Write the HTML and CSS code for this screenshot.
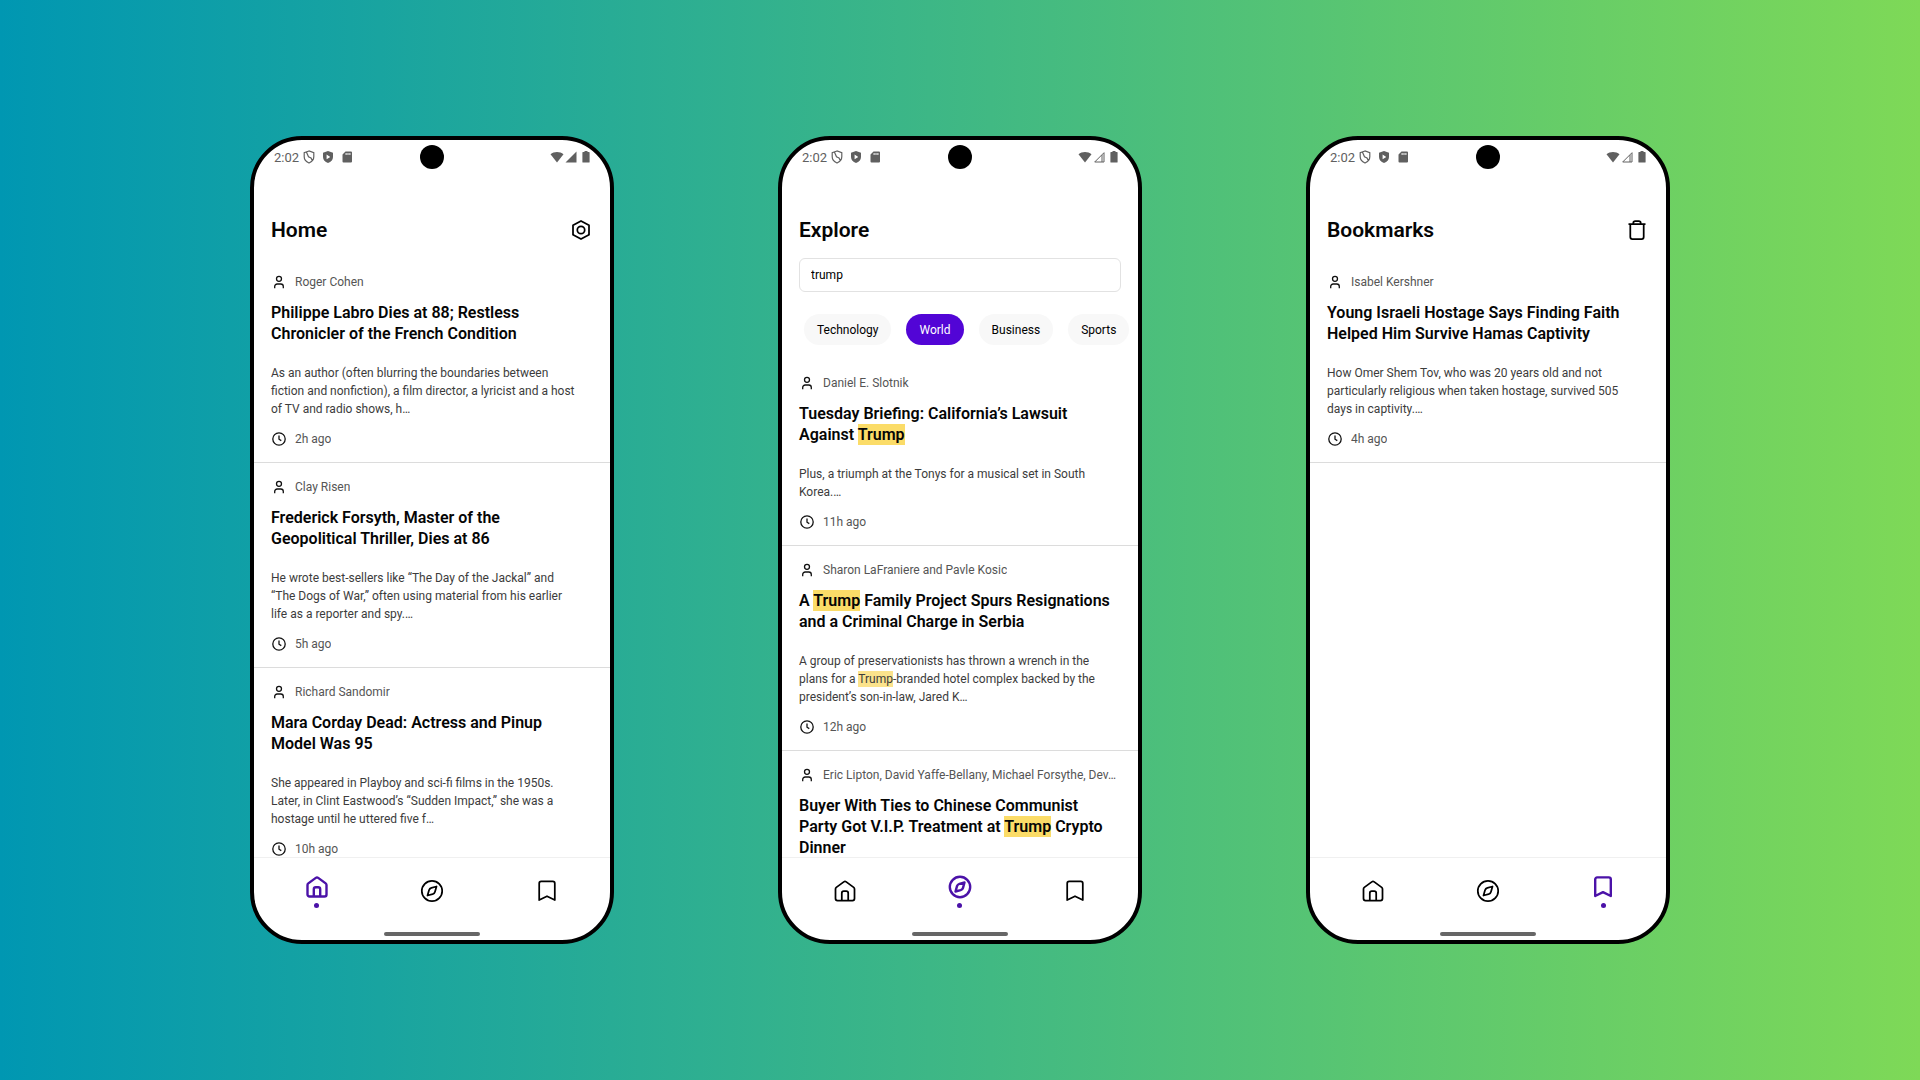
FILE: index.html
```html
<!DOCTYPE html>
<html lang="en">
<head>
<meta charset="utf-8">
<meta name="viewport" content="width=device-width, initial-scale=1">
<title>News reader</title>
<link rel="stylesheet" href="styles.css">
</head>
<body>
<svg class="sprite" aria-hidden="true">
  <symbol id="vpn" viewBox="0 0 12 14"><path d="M6 1 1.200 2.600v4.200c0 2.800 2 5 4.800 6.200 2.800-1.200 4.800-3.400 4.800-6.200V2.600zM3.500 2.200l2 4.600 2.500 1.200 1.400 2.600" fill="none" stroke="currentColor" stroke-width="1.200"/></symbol>
  <symbol id="play-shield" viewBox="0 0 12 14"><path d="M6 1 1 2.700v4.200c0 2.800 2 5 5 6.200 3-1.200 5-3.400 5-6.200V2.700zM4.600 4.600 8.300 7 4.600 9.300z" fill="currentColor" fill-rule="evenodd"/></symbol>
  <symbol id="sd" viewBox="0 0 12 14"><path d="M4.500 1.500H10a1 1 0 0 1 1 1v9a1 1 0 0 1-1 1H2.500a1 1 0 0 1-1-1V4.500zM4.600 3v2h1V3zM6.500 3v2h1V3zM8.400 3v2h1V3z" fill="currentColor" fill-rule="evenodd"/></symbol>
  <symbol id="wifi" viewBox="0 0 14 14"><path d="M7 12.500.5 4.300C4 1.200 10 1.200 13.500 4.300z" fill="currentColor"/></symbol>
  <symbol id="signal" viewBox="0 0 12 14"><path d="M11.500 1.500v11H.5z" fill="currentColor"/></symbol>
  <symbol id="signal-off" viewBox="0 0 12 14"><path d="M11 2.700v9.300H1.700zM9 5v7" fill="none" stroke="currentColor"/></symbol>
  <symbol id="battery" viewBox="0 0 8 14"><path d="M2.500 1h3v1H7a.6.6 0 0 1 .6.600v9.300a.6.600 0 0 1-.6.600H1a.6.600 0 0 1-.6-.6V2.600A.6.600 0 0 1 1 2h1.500z" fill="currentColor"/></symbol>
  <symbol id="user" viewBox="0 0 16 16"><circle cx="8" cy="4.800" r="2.500"/><path d="M3.700 14.200v-1.700A2.500 2.500 0 0 1 6.200 10h3.600a2.500 2.500 0 0 1 2.500 2.500v1.700"/></symbol>
  <symbol id="clock" viewBox="0 0 16 16"><circle cx="8" cy="8" r="6.200"/><path d="M8 4.500v3.700l2.300 1.400"/></symbol>
  <symbol id="settings" viewBox="0 0 24 24"><path d="m12 3 8 4.300v9.400L12 21l-8-4.300V7.300z"/><circle cx="12" cy="12" r="3.700"/></symbol>
  <symbol id="trash" viewBox="0 0 24 24"><path d="M3.500 6h17M5.300 6v13a2 2 0 0 0 2 2h9.400a2 2 0 0 0 2-2V6M8.300 6V5a2 2 0 0 1 2-2h3.400a2 2 0 0 1 2 2v1"/></symbol>
  <symbol id="home" viewBox="0 0 24 24"><path d="M2.500 10a2 2 0 0 1 .8-1.600l7.500-5.500a2 2 0 0 1 2.400 0l7.500 5.500a2 2 0 0 1 .8 1.600v9.500a2 2 0 0 1-2 2h-15a2 2 0 0 1-2-2zM8.800 21.500v-7.300a2 2 0 0 1 2-2h2.400a2 2 0 0 1 2 2v7.300"/></symbol>
  <symbol id="compass" viewBox="0 0 24 24"><circle cx="12" cy="12" r="10.200"/><path d="m16.500 7.500-1.500 5.300a3.500 3.500 0 0 1-2.400 2.400l-5.100 1.300L9 11.200a3.500 3.500 0 0 1 2.400-2.400z"/></symbol>
  <symbol id="bookmark" viewBox="0 0 24 24"><path d="M4.200 21V4.400a2 2 0 0 1 2-2h11.600a2 2 0 0 1 2 2V21L12 17.200z"/></symbol>
</svg>

<main class="stage">
  <section class="phone">
    <div class="status"><span class="time">2:02</span><svg class="glyph"><use href="#vpn"/></svg><svg class="glyph"><use href="#play-shield"/></svg><svg class="glyph"><use href="#sd"/></svg><span class="camera"></span><span class="radios"><svg class="wifi"><use href="#wifi"/></svg><svg class="cell"><use href="#signal"/></svg><svg class="battery"><use href="#battery"/></svg></span></div>
    <header class="bar"><h1>Home</h1><button class="action" aria-label="Settings"><svg class="icon"><use href="#settings"/></svg></button></header>
    <div class="feed">
      <article class="story">
        <p class="meta"><svg class="icon small"><use href="#user"/></svg><span>Roger Cohen</span></p>
        <h2>Philippe Labro Dies at 88; Restless Chronicler of the French Condition</h2>
        <p class="summary">As an author (often blurring the boundaries between fiction and nonfiction), a film director, a lyricist and a host of TV and radio shows, h…</p>
        <p class="meta"><svg class="icon small"><use href="#clock"/></svg><span>2h ago</span></p>
      </article>
      <article class="story">
        <p class="meta"><svg class="icon small"><use href="#user"/></svg><span>Clay Risen</span></p>
        <h2>Frederick Forsyth, Master of the Geopolitical Thriller, Dies at 86</h2>
        <p class="summary">He wrote best-sellers like “The Day of the Jackal” and “The Dogs of War,” often using material from his earlier life as a reporter and spy.…</p>
        <p class="meta"><svg class="icon small"><use href="#clock"/></svg><span>5h ago</span></p>
      </article>
      <article class="story">
        <p class="meta"><svg class="icon small"><use href="#user"/></svg><span>Richard Sandomir</span></p>
        <h2>Mara Corday Dead: Actress and Pinup Model Was 95</h2>
        <p class="summary">She appeared in Playboy and sci-fi films in the 1950s. Later, in Clint Eastwood’s “Sudden Impact,” she was a hostage until he uttered five f…</p>
        <p class="meta"><svg class="icon small"><use href="#clock"/></svg><span>10h ago</span></p>
      </article>
    </div>
    <nav class="tabs">
      <a class="tab active" href="#home" aria-label="Home"><svg class="icon"><use href="#home"/></svg></a>
      <a class="tab" href="#compass" aria-label="Explore"><svg class="icon"><use href="#compass"/></svg></a>
      <a class="tab" href="#bookmark" aria-label="Bookmarks"><svg class="icon"><use href="#bookmark"/></svg></a>
    </nav>
    <div class="handle"></div>
  </section>

  <section class="phone">
    <div class="status"><span class="time">2:02</span><svg class="glyph"><use href="#vpn"/></svg><svg class="glyph"><use href="#play-shield"/></svg><svg class="glyph"><use href="#sd"/></svg><span class="camera"></span><span class="radios"><svg class="wifi"><use href="#wifi"/></svg><svg class="cell"><use href="#signal-off"/></svg><svg class="battery"><use href="#battery"/></svg></span></div>
    <header class="bar"><h1>Explore</h1></header>
    <div class="search"><input type="text" value="trump" aria-label="Search articles"></div>
    <div class="chips">
      <button class="chip">Technology</button>
      <button class="chip selected">World</button>
      <button class="chip">Business</button>
      <button class="chip">Sports</button>
    </div>
    <div class="feed">
      <article class="story">
        <p class="meta"><svg class="icon small"><use href="#user"/></svg><span>Daniel E. Slotnik</span></p>
        <h2>Tuesday Briefing: California’s Lawsuit Against <mark>Trump</mark></h2>
        <p class="summary">Plus, a triumph at the Tonys for a musical set in South Korea.…</p>
        <p class="meta"><svg class="icon small"><use href="#clock"/></svg><span>11h ago</span></p>
      </article>
      <article class="story">
        <p class="meta"><svg class="icon small"><use href="#user"/></svg><span>Sharon LaFraniere and Pavle Kosic</span></p>
        <h2>A <mark>Trump</mark> Family Project Spurs Resignations and a Criminal Charge in Serbia</h2>
        <p class="summary">A group of preservationists has thrown a wrench in the plans for a <mark>Trump</mark>-branded hotel complex backed by the president’s son-in-law, Jared K…</p>
        <p class="meta"><svg class="icon small"><use href="#clock"/></svg><span>12h ago</span></p>
      </article>
      <article class="story">
        <p class="meta"><svg class="icon small"><use href="#user"/></svg><span>Eric Lipton, David Yaffe-Bellany, Michael Forsythe, Dev…</span></p>
        <h2>Buyer With Ties to Chinese Communist Party Got V.I.P. Treatment at <mark>Trump</mark> Crypto Dinner</h2>
      </article>
    </div>
    <nav class="tabs">
      <a class="tab" href="#home" aria-label="Home"><svg class="icon"><use href="#home"/></svg></a>
      <a class="tab active" href="#compass" aria-label="Explore"><svg class="icon"><use href="#compass"/></svg></a>
      <a class="tab" href="#bookmark" aria-label="Bookmarks"><svg class="icon"><use href="#bookmark"/></svg></a>
    </nav>
    <div class="handle"></div>
  </section>

  <section class="phone">
    <div class="status"><span class="time">2:02</span><svg class="glyph"><use href="#vpn"/></svg><svg class="glyph"><use href="#play-shield"/></svg><svg class="glyph"><use href="#sd"/></svg><span class="camera"></span><span class="radios"><svg class="wifi"><use href="#wifi"/></svg><svg class="cell"><use href="#signal-off"/></svg><svg class="battery"><use href="#battery"/></svg></span></div>
    <header class="bar"><h1>Bookmarks</h1><button class="action" aria-label="Clear bookmarks"><svg class="icon"><use href="#trash"/></svg></button></header>
    <div class="feed">
      <article class="story">
        <p class="meta"><svg class="icon small"><use href="#user"/></svg><span>Isabel Kershner</span></p>
        <h2>Young Israeli Hostage Says Finding Faith Helped Him Survive Hamas Captivity</h2>
        <p class="summary">How Omer Shem Tov, who was 20 years old and not particularly religious when taken hostage, survived 505 days in captivity.…</p>
        <p class="meta"><svg class="icon small"><use href="#clock"/></svg><span>4h ago</span></p>
      </article>
    </div>
    <nav class="tabs">
      <a class="tab" href="#home" aria-label="Home"><svg class="icon"><use href="#home"/></svg></a>
      <a class="tab" href="#compass" aria-label="Explore"><svg class="icon"><use href="#compass"/></svg></a>
      <a class="tab active" href="#bookmark" aria-label="Bookmarks"><svg class="icon"><use href="#bookmark"/></svg></a>
    </nav>
    <div class="handle"></div>
  </section>
</main>
</body>
</html>
```
FILE: styles.css
```css
* { box-sizing: border-box; }

body {
  margin: 0;
  font-family: Roboto, "Liberation Sans", sans-serif;
  font-size: 12px;
  color: #050505;
  background: linear-gradient(90deg, #0097b2, #7ed957);
}

h1, h2, p { margin: 0; }

.sprite { position: absolute; width: 0; height: 0; }

.stage {
  display: flex;
  flex-wrap: wrap;
  justify-content: center;
  align-content: center;
  gap: 40px 164px;
  min-height: 100vh;
  padding: 40px 16px;
}

.phone {
  display: flex;
  flex-direction: column;
  flex: 0 1 364px;
  min-width: 0;
  aspect-ratio: 364 / 808;
  border: 4px solid #000;
  border-radius: 52px;
  background: #fff;
  overflow: hidden;
}

/* Status bar */
.status {
  position: relative;
  display: flex;
  align-items: center;
  flex: none;
  gap: 7px;
  height: 34px;
  padding: 0 20px;
  color: #606060;
}

.time { margin-right: -3px; font-size: 13px; }
.glyph { width: 12px; height: 14px; }

.camera {
  position: absolute;
  left: 50%;
  top: 50%;
  width: 24px;
  height: 24px;
  border-radius: 50%;
  background: #000;
  transform: translate(-50%, -50%);
}

.radios { display: flex; align-items: center; gap: 1px; margin-left: auto; }
.wifi { width: 14px; height: 14px; }
.cell { width: 12px; height: 14px; }
.battery { width: 8px; height: 14px; margin-left: 4px; }

/* Icons */
.icon {
  display: block;
  width: 24px;
  height: 24px;
  fill: none;
  stroke: currentColor;
  stroke-width: 1.75;
  stroke-linejoin: round;
}

.small { flex: none; width: 16px; height: 16px; stroke-width: 1.3; color: #111; }

/* Screen header */
.bar {
  display: flex;
  align-items: center;
  justify-content: space-between;
  flex: none;
  padding: 44px 17px 16px;
}

h1 { font-size: 21px; line-height: 24px; font-weight: 600; }

.action { margin: 0; padding: 0; border: 0; background: none; color: #000; }

.search { flex: none; padding: 0 17px; }

.search input {
  display: block;
  width: 100%;
  height: 34px;
  padding: 0 11px;
  border: 1px solid #e2e2e2;
  border-radius: 6px;
  font: inherit;
  color: #000;
  background: #fff;
}

.chips { display: flex; flex: none; gap: 15px; padding: 22px 0 14px 22px; overflow: hidden; }

.chip {
  flex: none;
  height: 31px;
  padding: 0 13px;
  border: 0;
  border-radius: 16px;
  font: inherit;
  color: #000;
  background: #f8f8f8;
}

.selected { color: #fff; background: #5205d6; }

/* Stories */
.feed { flex: 1; min-height: 0; overflow: hidden; }

.story { padding: 16px 17px 15px; border-bottom: 1px solid #dcdcdc; }

.meta { display: flex; align-items: center; gap: 8px; line-height: 16px; color: #555; }
.meta span { overflow: hidden; white-space: nowrap; text-overflow: ellipsis; }

h2 { margin: 12px 0 20px; padding-right: 6px; font-size: 16px; line-height: 21px; font-weight: 600; }

.summary { margin-bottom: 13px; padding-right: 14px; line-height: 18px; color: #3c3c3c; }

mark { padding: 1px 0; color: inherit; background: #fbdc68; }
.summary mark { background: #fbe38c; }

/* Tab bar */
.tabs {
  display: flex;
  align-items: center;
  justify-content: space-around;
  flex: none;
  height: 67px;
  padding: 0 5px;
  border-top: 1px solid #f0f0f0;
}

.tab { display: flex; flex-direction: column; align-items: center; gap: 4px; color: #000; }
.active { color: #4b12a8; }
.active .icon { stroke-width: 2.4; }
.active::after { content: ""; width: 5px; height: 5px; border-radius: 50%; background: currentColor; }

.handle { align-self: center; flex: none; width: 96px; height: 4px; margin: 8px 0 4px; border-radius: 2px; background: #666; }
```
